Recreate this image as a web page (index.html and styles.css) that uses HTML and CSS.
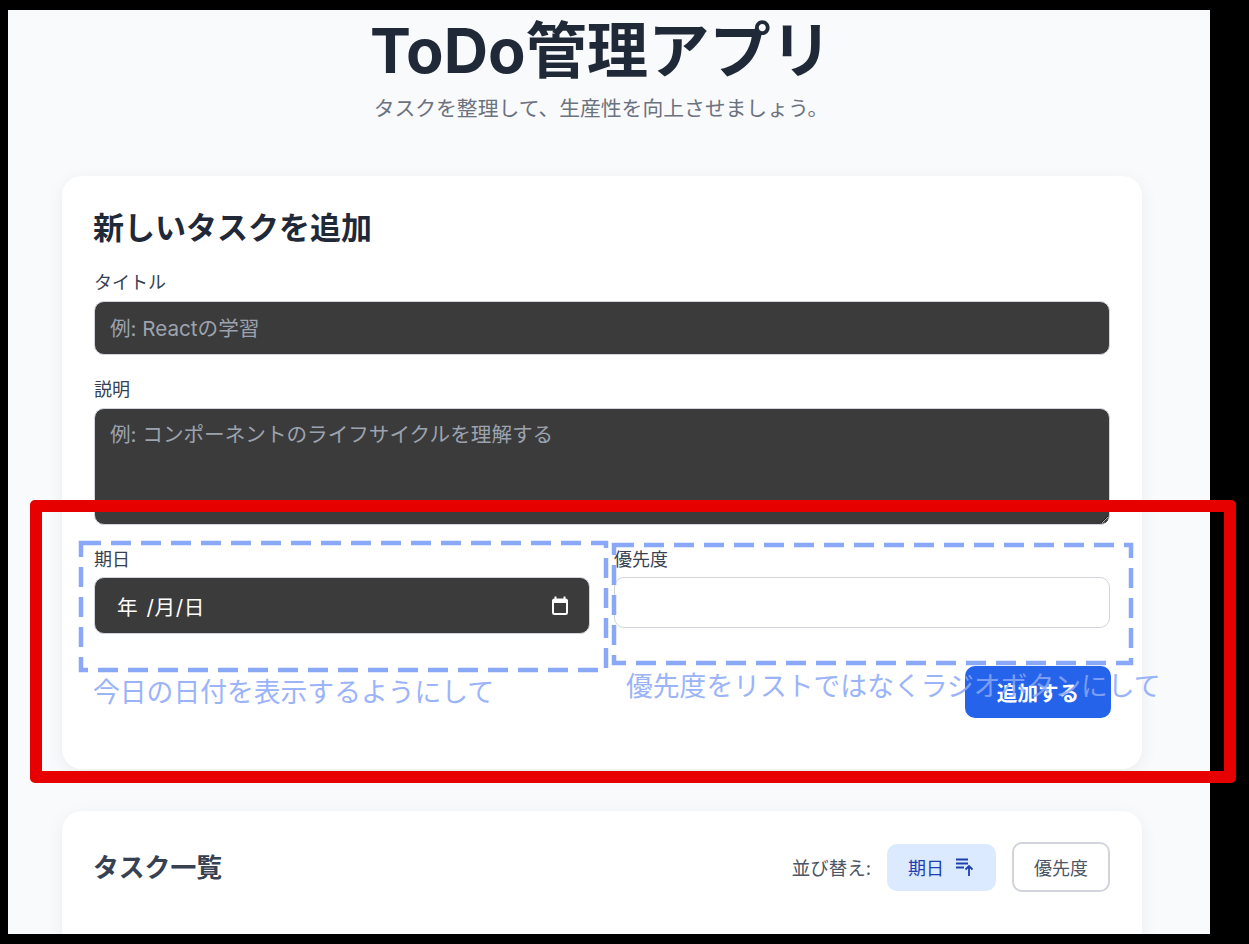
FILE: index.html
```html
<!DOCTYPE html>
<html lang="ja">
<head>
  <meta charset="UTF-8">
  <meta name="viewport" content="width=device-width, initial-scale=1.0">
  <title>ToDo管理アプリ</title>
  <link rel="stylesheet" href="styles.css">
</head>
<body>
  <div class="screen">
    <header class="header">
      <h1>ToDo管理アプリ</h1>
      <p>タスクを整理して、生産性を向上させましょう。</p>
    </header>

    <main class="container">
      <section class="card form-card">
        <h2>新しいタスクを追加</h2>
        <div class="field">
          <label>タイトル</label>
          <input class="control title-input" type="text" placeholder="例: Reactの学習">
        </div>
        <div class="field">
          <label>説明</label>
          <textarea class="control desc-input" placeholder="例: コンポーネントのライフサイクルを理解する"></textarea>
        </div>
        <div class="form-row">
          <div class="col">
            <label>期日</label>
            <div class="control date-input">
              <span>年 /月/日</span>
              <svg width="18" height="20" viewBox="0 0 18 20" fill="none" stroke="#fff">
                <path d="M4.5 0.5v3M13.5 0.5v3" stroke-width="2"/>
                <rect x="2" y="3.5" width="14" height="14.5" rx="1.5" stroke-width="2"/>
                <path d="M2 5.5h14" stroke-width="3"/>
              </svg>
            </div>
          </div>
          <div class="col">
            <label>優先度</label>
            <select class="control priority-input"></select>
          </div>
        </div>
        <div class="form-actions">
          <button class="add-btn">追加する</button>
        </div>
      </section>

      <section class="card list-card">
        <h2>タスク一覧</h2>
        <div class="sort">
          <span class="sort-label">並び替え:</span>
          <button class="sort-btn active">期日
            <svg width="18" height="20" viewBox="0 0 18 20" fill="none" stroke="#1e40af" stroke-width="1.8">
              <path d="M0 2.5h12M0 6.5h12M0 10.5h8"/>
              <path d="M13 19V9M9.5 12.5L13 9l3.5 3.5"/>
            </svg>
          </button>
          <button class="sort-btn">優先度</button>
        </div>
      </section>
    </main>
  </div>

  <!-- review markup drawn over the page -->
  <svg class="dashes" width="1249" height="944" fill="none" stroke="#8aa8f8" stroke-width="4.5" stroke-dasharray="20 10">
    <rect x="81" y="543" width="525" height="127"/>
    <rect x="614" y="545" width="517" height="118"/>
  </svg>
  <div class="note note-date">今日の日付を表示するようにして</div>
  <div class="note note-priority">優先度をリストではなくラジオボタンにして</div>
  <div class="red-box"></div>
</body>
</html>
```

FILE: styles.css
```css
* {
  box-sizing: border-box;
}

html, body {
  height: 100%;
}

body {
  margin: 0;
  background-color: #000;
  font-family: Inter, "Noto Sans CJK JP", sans-serif;
  overflow: hidden;
  position: relative;
}

.screen {
  margin: 10px 39px 0 8px;
  height: 924px;
  background-color: #f9fafb;
  overflow: hidden;
}

.header {
  text-align: center;
  padding-top: 1px;
  padding-right: 16px;
  height: 166px;
}

.header h1 {
  margin: 0;
  font-size: 61.3px;
  line-height: 80px;
  font-weight: 700;
  color: #1f2937;
}

.header p {
  margin: 4px 0 0;
  font-size: 20.8px;
  line-height: 28px;
  color: #6b7280;
}

.container {
  margin-left: 54px;
  width: 1080px;
}

.card {
  background-color: #fff;
  border-radius: 20px;
  box-shadow: 0 4px 18px rgba(0, 0, 0, 0.06);
  padding: 32px;
}

.form-card {
  height: 593px;
  margin-bottom: 42px;
}

.form-card h2 {
  margin: 0 0 21px -1px;
  font-size: 31px;
  line-height: 40px;
  font-weight: 700;
  color: #1f2937;
}

label {
  display: block;
  padding-top: 1px;
  font-size: 18px;
  line-height: 26px;
  color: #374151;
  margin-bottom: 5px;
}

.control {
  display: block;
  width: 100%;
  border: 1.5px solid #d1d5db;
  border-radius: 10px;
  font-family: inherit;
  font-size: 20.6px;
  color: #fff;
  background-color: #3b3b3b;
  padding: 0 15px;
}

.control::placeholder {
  color: #9ca3af;
}

.field {
  margin-bottom: 21px;
}

.title-input {
  height: 54px;
}

.desc-input {
  height: 117px;
  padding-top: 12px;
  line-height: 28px;
  resize: vertical;
}

.form-row {
  display: grid;
  grid-template-columns: 1fr 1fr;
  gap: 24px;
}

.form-row label {
  margin-bottom: 4px;
}

.date-input {
  height: 57px;
  display: flex;
  align-items: center;
  justify-content: space-between;
  padding: 0 20px 0 22px;
  word-spacing: 2px;
  letter-spacing: 0.6px;
}

.priority-input {
  height: 51px;
  appearance: none;
  background-color: #fff;
}

.form-actions {
  display: flex;
  justify-content: flex-end;
  margin-top: 32px;
}

.add-btn {
  width: 146px;
  height: 52px;
  margin-right: -1px;
  border: none;
  border-radius: 10px;
  background-color: #2563eb;
  color: #fff;
  font-family: inherit;
  font-size: 20.6px;
  font-weight: 700;
}

.list-card {
  height: 200px;
  padding-top: 31px;
  display: flex;
  justify-content: space-between;
  align-items: flex-start;
}

.list-card h2 {
  margin: 8px 0 0 -1px;
  font-size: 25.8px;
  line-height: 36px;
  font-weight: 700;
  color: #374151;
}

.sort {
  display: flex;
  align-items: center;
  gap: 16px;
}

.sort-label {
  font-size: 18.5px;
  color: #4b5563;
}

.sort-btn {
  height: 50px;
  padding: 0 20px;
  border: 2px solid #d1d5db;
  border-radius: 10px;
  background-color: #fff;
  color: #4b5563;
  font-family: inherit;
  font-size: 18px;
}

.sort-btn.active {
  display: flex;
  align-items: center;
  gap: 12px;
  height: 47px;
  padding: 0 22px 0 21px;
  border: none;
  background-color: #dbeafe;
  color: #1e40af;
}

/* markup on top of the screenshot */
.dashes {
  position: absolute;
  left: 0;
  top: 0;
}

.note {
  position: absolute;
  font-size: 26.8px;
  line-height: 36px;
  color: #8aa8f8;
  opacity: 0.85;
  white-space: nowrap;
}

.note-date {
  left: 93px;
  top: 674px;
}

.note-priority {
  left: 626px;
  top: 668px;
}

.red-box {
  position: absolute;
  left: 30px;
  top: 500px;
  width: 1206px;
  height: 283px;
  border: 12px solid #e60000;
  border-radius: 5px;
}
```
